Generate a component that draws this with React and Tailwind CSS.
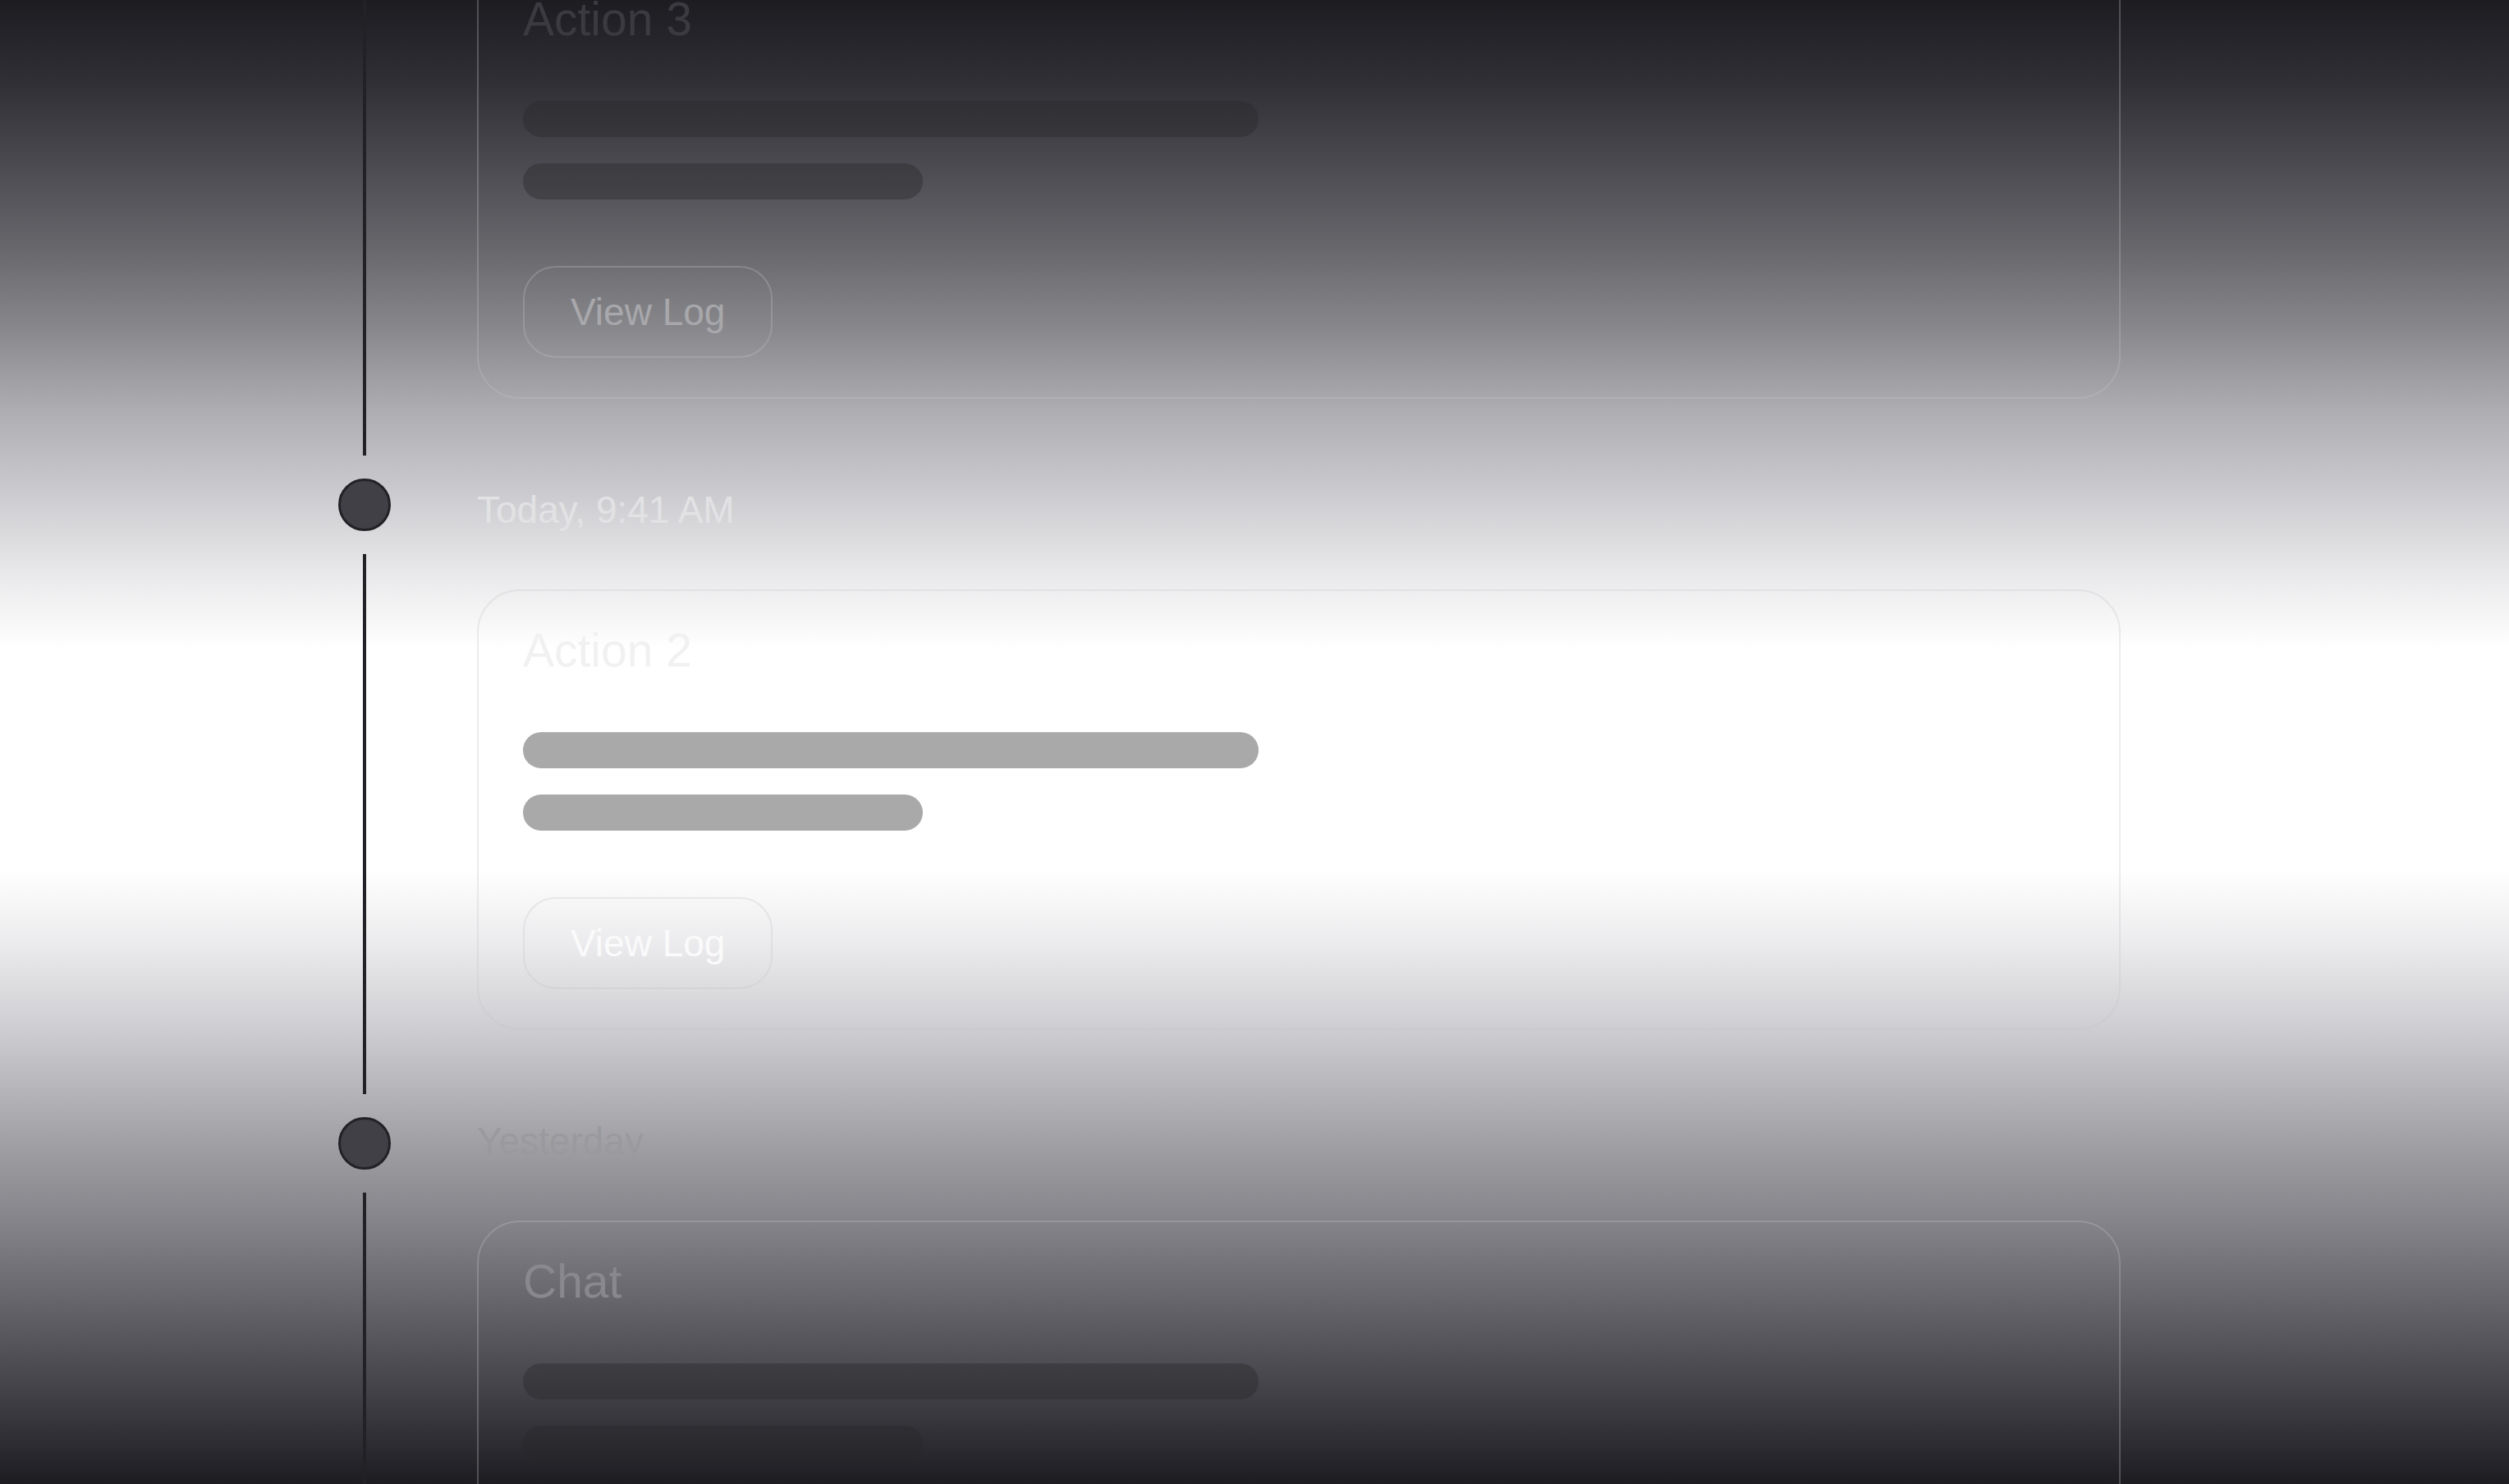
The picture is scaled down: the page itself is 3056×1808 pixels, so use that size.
const cards = {
  action3: { title: 'Action 3', titleTone: 'text-[#3a3a40]', buttonTone: 'text-[#a8a8ac]' },
  action2: { title: 'Action 2', titleTone: 'text-[#f1f1f2]', buttonTone: 'text-[#fafafa]' },
  chat: { title: 'Chat', titleTone: 'text-[#88888e]', buttonTone: 'text-[#3a3a40]' },
};

function Card({ title, titleTone, buttonTone, className = '' }) {
  return (
    <div className={`flex flex-col items-start rounded-[52px] border-2 border-[#c4c4c8]/30 px-[54px] pt-[44px] pb-[48px] ${className}`}>
      <h3 className={`text-[57px] leading-none ${titleTone}`}>{title}</h3>
      <div className="mt-[71px] h-[44px] w-[896px] rounded-full bg-zinc-800/40" />
      <div className="mt-[32px] h-[44px] w-[487px] rounded-full bg-zinc-800/40" />
      <button
        className={`mt-[81px] h-[112px] rounded-[40px] border-2 border-[#c4c4c8]/30 px-[56px] text-[46px] leading-none ${buttonTone}`}
      >
        View Log
      </button>
    </div>
  );
}

function DateLabel({ children, tone, className = '' }) {
  return <p className={`text-[46px] leading-none ${tone} ${className}`}>{children}</p>;
}

function Dot() {
  return <div className="size-[64px] shrink-0 rounded-full border-[3px] border-[#222226] bg-[#404046]" />;
}

function Timeline() {
  return (
    <div className="flex w-[64px] shrink-0 flex-col items-center gap-[28px]">
      <div className="h-[555px] w-[4px] shrink-0 bg-[#222226]" />
      <Dot />
      <div className="h-[658px] w-[4px] shrink-0 bg-[#222226]" />
      <Dot />
      <div className="w-[4px] flex-1 bg-[#222226]" />
    </div>
  );
}

export default function App() {
  return (
    <div className="h-screen w-full overflow-hidden bg-[linear-gradient(180deg,#1c1c21_0px,#2f2f35_100px,#4a4a50_200px,#66666b_300px,#88888c_400px,#aeaeb2_500px,#cbcbcf_600px,#e9e9eb_700px,#ffffff_790px,#ffffff_1060px,#ebebed_1150px,#cfcfd3_1250px,#9e9ea2_1400px,#808086_1500px,#606066_1600px,#404046_1700px,#1c1c21_1808px)] font-['Liberation_Sans',Arial,sans-serif]">
      <div className="flex h-full pl-[412px]">
        <Timeline />
        <div className="ml-[105px] flex w-[2002px] flex-col">
          <Card {...cards.action3} className="-mt-[51px]" />
          <DateLabel tone="text-[#e2e2e4]" className="mt-[112px]">
            Today, 9:41 AM
          </DateLabel>
          <Card {...cards.action2} className="mt-[74px]" />
          <DateLabel tone="text-[#9a9a9e]" className="mt-[112px]">
            Yesterday
          </DateLabel>
          <Card {...cards.chat} className="mt-[74px]" />
        </div>
      </div>
    </div>
  );
}
